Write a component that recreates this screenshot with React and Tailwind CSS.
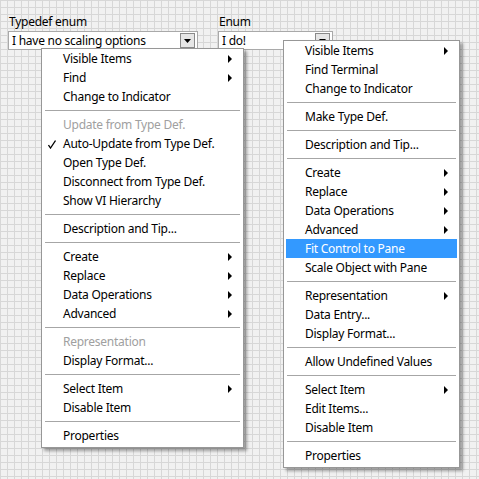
import React from "react";

const SEP = "sep";

const typedefMenu = [
  { label: "Visible Items", sub: true },
  { label: "Find", sub: true },
  { label: "Change to Indicator" },
  SEP,
  { label: "Update from Type Def.", disabled: true },
  { label: "Auto-Update from Type Def.", checked: true },
  { label: "Open Type Def." },
  { label: "Disconnect from Type Def." },
  { label: "Show VI Hierarchy" },
  SEP,
  { label: "Description and Tip..." },
  SEP,
  { label: "Create", sub: true },
  { label: "Replace", sub: true },
  { label: "Data Operations", sub: true },
  { label: "Advanced", sub: true },
  SEP,
  { label: "Representation", disabled: true },
  { label: "Display Format..." },
  SEP,
  { label: "Select Item", sub: true },
  { label: "Disable Item" },
  SEP,
  { label: "Properties" },
];

const enumMenu = [
  { label: "Visible Items", sub: true },
  { label: "Find Terminal" },
  { label: "Change to Indicator" },
  SEP,
  { label: "Make Type Def." },
  SEP,
  { label: "Description and Tip..." },
  SEP,
  { label: "Create", sub: true },
  { label: "Replace", sub: true },
  { label: "Data Operations", sub: true },
  { label: "Advanced", sub: true },
  { label: "Fit Control to Pane", active: true },
  { label: "Scale Object with Pane" },
  SEP,
  { label: "Representation", sub: true },
  { label: "Data Entry..." },
  { label: "Display Format..." },
  SEP,
  { label: "Allow Undefined Values" },
  SEP,
  { label: "Select Item", sub: true },
  { label: "Edit Items..." },
  { label: "Disable Item" },
  SEP,
  { label: "Properties" },
];

function SubArrow({ color }) {
  return (
    <svg width="5" height="8" viewBox="0 0 5 8" className="absolute right-[8px] top-[6px]">
      <polygon points="0,0 4,4 0,8" fill={color} />
    </svg>
  );
}

function Check() {
  return (
    <svg width="8" height="9" viewBox="0 0 8 9" className="absolute left-[4px] top-[6px]">
      <path d="M0.5 5 L2.5 8 L7.5 0.5" fill="none" stroke="#000" strokeWidth="1.3" />
    </svg>
  );
}

function ContextMenu({ items, className }) {
  return (
    <div
      className={`absolute flex flex-col border border-[#979797] bg-white px-[2px] pb-[2px] shadow-[3px_3px_3px_rgba(0,0,0,0.35)] ${className}`}
    >
      {items.map((item, i) =>
        item === SEP ? (
          <div key={i} className="flex h-[9px] items-center pl-[1px] pr-[1px]">
            <div className="h-px w-full bg-[#a6a6a6]" />
          </div>
        ) : (
          <div
            key={i}
            className={`relative flex h-[19px] items-center pl-[19px] ${
              item.active ? "bg-[#3399ff] text-white" : item.disabled ? "text-[#a0a0a0]" : "text-black"
            }`}
          >
            {item.checked && <Check />}
            <span>{item.label}</span>
            {item.sub && <SubArrow color={item.active ? "#fff" : "#000"} />}
          </div>
        )
      )}
    </div>
  );
}

function EnumControl({ label, value, className, width }) {
  return (
    <div className={`absolute flex flex-col ${className}`}>
      <span className="h-[19px] pl-[1px] leading-[19px]">{label}</span>
      <div
        className={`flex h-[19px] items-center justify-between border border-[#a9a9a9] bg-white pl-[3px] pr-[2px] ${width}`}
      >
        <span>{value}</span>
        <div className="flex h-[15px] w-[15px] items-center justify-center border border-[#8a8a8a] bg-[#e6e6e6]">
          <svg width="7" height="4" viewBox="0 0 7 4">
            <polygon points="0,0 7,0 3.5,4" fill="#000" />
          </svg>
        </div>
      </div>
    </div>
  );
}

export default function App() {
  return (
    <div
      className="relative h-[479px] w-[479px] overflow-hidden bg-[#f1f1f1] bg-[linear-gradient(to_right,#d7d7d7_1px,transparent_1px),linear-gradient(to_bottom,#d7d7d7_1px,transparent_1px)] bg-[size:7px_7px] text-[12px] tracking-[-0.25px] text-black"
      style={{ fontFamily: '"Noto Sans", "Liberation Sans", sans-serif' }}
    >
      <EnumControl label="Typedef enum" value="I have no scaling options" className="left-[8px] top-[12px]" width="w-[190px]" />
      <EnumControl label="Enum" value="I do!" className="left-[218px] top-[12px]" width="w-[115px]" />

      <ContextMenu items={typedefMenu} className="left-[41px] top-[48px] w-[203px]" />
      <ContextMenu items={enumMenu} className="left-[283px] top-[40px] w-[177px]" />
    </div>
  );
}
